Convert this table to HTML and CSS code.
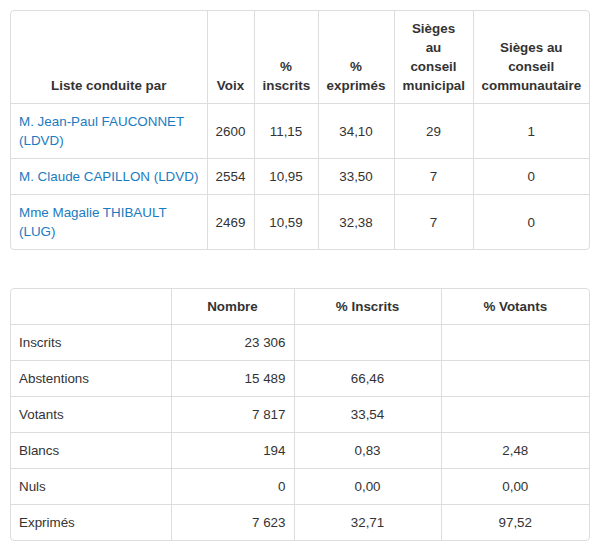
FILE: index.html
```html
<!DOCTYPE html>
<html lang="fr">
<head>
<meta charset="utf-8">
<link rel="stylesheet" href="styles.css">
</head>
<body>
<div class="panel panel-first">
<table class="results">
<colgroup>
<col class="c1"><col class="c2"><col class="c3"><col class="c4"><col class="c5"><col class="c6">
</colgroup>
<thead>
<tr>
<th>Liste conduite par</th>
<th>Voix</th>
<th>%<br>inscrits</th>
<th>%<br>exprimés</th>
<th>Sièges<br>au<br>conseil<br>municipal</th>
<th>Sièges au<br>conseil<br>communautaire</th>
</tr>
</thead>
<tbody>
<tr>
<td class="name"><a href="#">M. Jean-Paul FAUCONNET<br>(LDVD)</a></td>
<td>2600</td><td>11,15</td><td>34,10</td><td>29</td><td>1</td>
</tr>
<tr>
<td class="name"><a href="#">M. Claude CAPILLON (LDVD)</a></td>
<td>2554</td><td>10,95</td><td>33,50</td><td>7</td><td>0</td>
</tr>
<tr>
<td class="name"><a href="#">Mme Magalie THIBAULT<br>(LUG)</a></td>
<td>2469</td><td>10,59</td><td>32,38</td><td>7</td><td>0</td>
</tr>
</tbody>
</table>
</div>

<div class="panel">
<table class="stats">
<colgroup>
<col class="s1"><col class="s2"><col class="s3"><col class="s4">
</colgroup>
<thead>
<tr><th></th><th>Nombre</th><th>% Inscrits</th><th>% Votants</th></tr>
</thead>
<tbody>
<tr><td class="label">Inscrits</td><td class="num">23 306</td><td></td><td></td></tr>
<tr><td class="label">Abstentions</td><td class="num">15 489</td><td>66,46</td><td></td></tr>
<tr><td class="label">Votants</td><td class="num">7 817</td><td>33,54</td><td></td></tr>
<tr><td class="label">Blancs</td><td class="num">194</td><td>0,83</td><td>2,48</td></tr>
<tr><td class="label">Nuls</td><td class="num">0</td><td>0,00</td><td>0,00</td></tr>
<tr><td class="label">Exprimés</td><td class="num">7 623</td><td>32,71</td><td>97,52</td></tr>
</tbody>
</table>
</div>
</body>
</html>
```
FILE: styles.css
```css
html, body {
  margin: 0;
  padding: 0;
  background: #fff;
}
body {
  padding: 10px 10px 0 10px;
  font-family: "Liberation Sans", Arial, sans-serif;
  font-size: 13.4px;
  line-height: 19px;
  color: #333;
}
.panel {
  width: 578px;
  border: 1px solid #ddd;
  border-radius: 4px;
  overflow: hidden;
}
.panel-first {
  margin-bottom: 38px;
}
table {
  width: 100%;
  border-collapse: collapse;
  table-layout: fixed;
}
th, td {
  padding: 8px;
  border-left: 1px solid #ddd;
  border-top: 1px solid #ddd;
  text-align: center;
}
tr > :first-child { border-left: none; }
thead tr:first-child > * { border-top: none; }
th {
  font-weight: bold;
  vertical-align: bottom;
}
td { vertical-align: middle; }
td.name, td.label { text-align: left; }
td.name { white-space: nowrap; }
td.num { text-align: right; }
a { color: #1a7bc0; text-decoration: none; }
.c1 { width: 196px; }
.c2 { width: 47px; }
.c3 { width: 64px; }
.c4 { width: 76px; }
.c5 { width: 79px; }
.c6 { width: 116px; }
.s1 { width: 160px; }
.s2 { width: 123px; }
.s3 { width: 147px; }
.s4 { width: 148px; }
```
